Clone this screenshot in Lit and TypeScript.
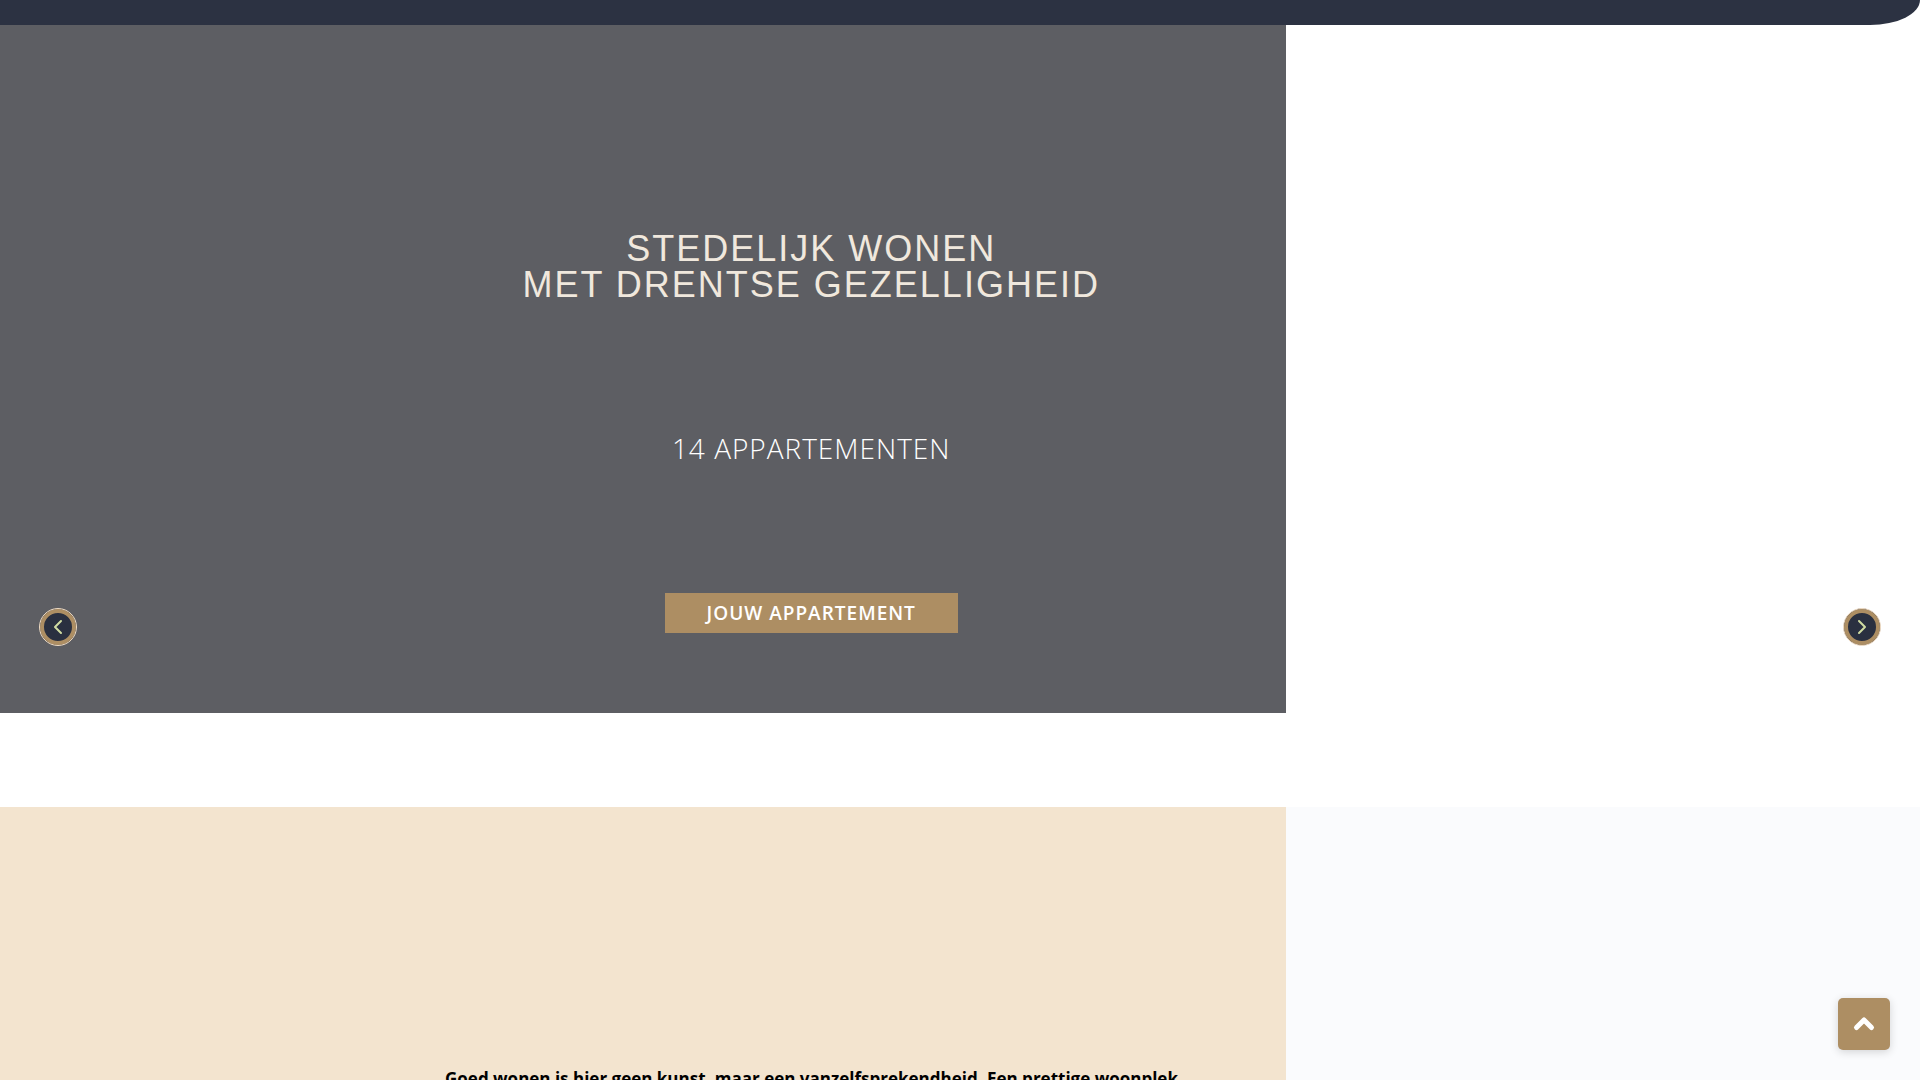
import { LitElement, html, css } from "lit";
import { customElement } from "lit/decorators.js";

@customElement("app-root")
export class AppRoot extends LitElement {
  static styles = css`
    :host {
      display: block;
      position: relative;
      min-height: 100vh;
      background: #fff;
      font-family: "Open Sans", "Noto Sans", sans-serif;
    }
    * {
      box-sizing: border-box;
    }
    .page {
      display: flex;
      flex-direction: column;
      height: 100vh;
      overflow: hidden;
    }
    .bar {
      flex: none;
      height: 25px;
      background: #2c3242;
      border-bottom-right-radius: 50px 25px;
    }
    .hero {
      flex: none;
      position: relative;
    }
    .slide {
      display: flex;
      flex-direction: column;
      align-items: center;
      width: 67%;
      padding: 206px 108px 80px 444px;
      background: #5d5e63;
      text-align: center;
    }
    .title {
      margin: 0;
      font: 400 36px/36px "Liberation Sans", Arial, sans-serif;
      letter-spacing: 2px;
      color: #f0e8dd;
      text-transform: uppercase;
      white-space: nowrap;
    }
    .subtitle {
      margin: 125px 0;
      font-size: 28px;
      line-height: 40px;
      font-weight: 300;
      letter-spacing: 1px;
      color: #fff;
      text-transform: uppercase;
      white-space: nowrap;
    }
    .cta {
      padding: 0 42px;
      background: #ad8e63;
      font-size: 19px;
      line-height: 40px;
      font-weight: 600;
      letter-spacing: 1px;
      color: #fff;
      text-decoration: none;
      text-transform: uppercase;
      white-space: nowrap;
    }
    .arrow {
      position: absolute;
      bottom: 67px;
      display: flex;
      align-items: center;
      justify-content: center;
      width: 38px;
      height: 38px;
      padding: 0;
      border: 1px solid #f0dcc4;
      border-radius: 50%;
      background: #2a3040;
      box-shadow: inset 0 0 0 4px #ad8e63;
      cursor: pointer;
    }
    .prev {
      left: 39px;
    }
    .next {
      right: 39px;
    }
    .intro {
      flex: 1;
      margin-top: 94px;
      background: #fafbfd;
      min-height: 0;
    }
    .panel {
      width: 67%;
      height: 100%;
      padding: 258px 100px 0 445px;
      background: #f3e4cf;
    }
    .lead {
      margin: 0;
      font-size: 17px;
      line-height: 28px;
      font-weight: 700;
      color: #000;
      white-space: nowrap;
    }
    .top {
      position: absolute;
      right: 30px;
      bottom: 30px;
      display: flex;
      align-items: center;
      justify-content: center;
      width: 52px;
      height: 52px;
      border-radius: 5px;
      background: #ad8e63;
      box-shadow: 0 2px 8px rgba(0, 0, 0, 0.16);
    }
    svg {
      display: block;
      fill: none;
      stroke-linecap: round;
      stroke-linejoin: round;
    }
    .arrow svg {
      stroke: #d0dca2;
      stroke-width: 2;
    }
    .top svg {
      stroke: #fff;
      stroke-width: 5;
    }
  `;

  render() {
    return html`
      <div class="page">
        <header class="bar"></header>
        <section class="hero">
          <div class="slide">
            <h1 class="title">Stedelijk wonen<br />met Drentse gezelligheid</h1>
            <p class="subtitle">14 appartementen</p>
            <a class="cta" href="#appartement">Jouw appartement</a>
          </div>
          <button class="arrow prev" aria-label="Vorige">
            <svg width="16" height="16" viewBox="0 0 16 16"><path d="M11 2 5 8l6 6" /></svg>
          </button>
          <button class="arrow next" aria-label="Volgende">
            <svg width="16" height="16" viewBox="0 0 16 16"><path d="M5 2l6 6-6 6" /></svg>
          </button>
        </section>
        <section class="intro" id="appartement">
          <div class="panel">
            <p class="lead">
              Goed wonen is hier geen kunst, maar een vanzelfsprekendheid. Een prettige woonplek
            </p>
          </div>
        </section>
      </div>
      <a class="top" href="#" aria-label="Naar boven">
        <svg width="24" height="24" viewBox="0 0 24 24"><path d="M4.500 15.500 12 8l7.500 7.500" /></svg>
      </a>
    `;
  }
}
